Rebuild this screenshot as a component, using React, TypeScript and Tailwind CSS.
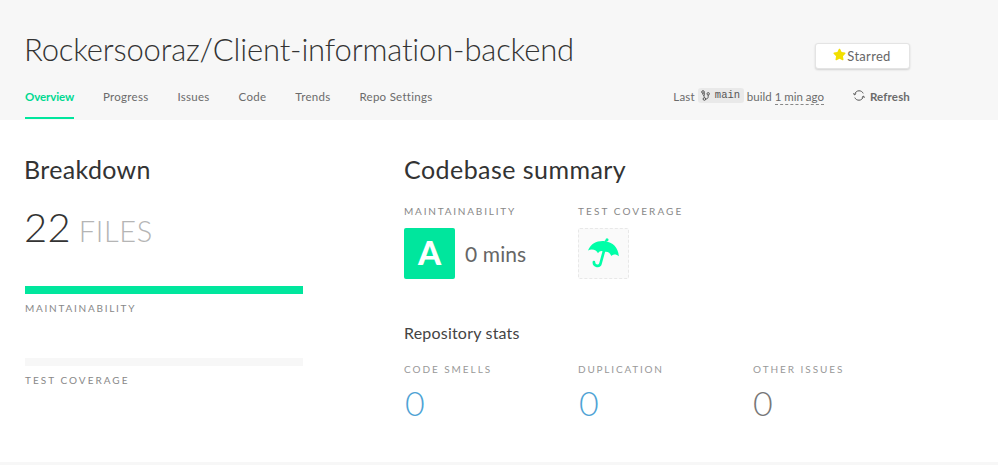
import { FaStar } from 'react-icons/fa';

const tabs = ['Progress', 'Issues', 'Code', 'Trends', 'Repo Settings'];

function Umbrella() {
  return (
    <svg width="33" height="31" viewBox="0 0 33 31" fill="none">
      <path
        d="M1 12.5C4 5.5 10 2.6 17.5 3.2C26 3.9 31.5 10 31.8 18.2C29.5 16 26.5 15.8 24.3 18C23 14.6 20 13 17 14.2C15.2 12.5 12.6 12.8 11 15.2C9.7 12 5 10.3 1 12.5Z"
        fill="#00ffa8"
      />
      <path d="M18.3 4L19 2.3" stroke="#00ffa8" strokeWidth="2" />
      <circle cx="20" cy="1.7" r="1.5" fill="#00ffa8" />
      <path
        d="M16.8 13.5L13.6 25.2C12.7 29.3 6.7 28.6 6.9 24"
        stroke="#00ffa8"
        strokeWidth="2.7"
        strokeLinecap="round"
      />
    </svg>
  );
}

function BranchIcon() {
  return (
    <svg width="9" height="11" viewBox="0 0 9 11" fill="none" stroke="#555" strokeWidth="1">
      <circle cx="2" cy="2" r="1.3" />
      <circle cx="3.4" cy="9" r="1.3" />
      <circle cx="7.2" cy="3.8" r="1.2" />
      <path d="M1.700 3.3C1.700 5 3.400 6 3.400 7.7M3.200 2.600C4 4 3.400 5 2.800 6M7.2 5V6.4C7.2 8.4 6 9 4.700 9" />
    </svg>
  );
}

function RefreshIcon() {
  return (
    <svg width="12" height="11" viewBox="0 0 12 11" fill="none" stroke="#555" strokeWidth="1">
      <path d="M1.6 4.6C2.3 2 4 .8 6 .8C7.900 .8 9.400 1.700 10.200 3.400M10.400 6.400C9.700 9 8 10.200 6 10.200C4.100 10.200 2.600 9.300 1.800 7.600" />
      <path d="M0 3.200L1.500 4.900L3.200 3.500M12 7.800L10.500 6.100L8.800 7.500" />
    </svg>
  );
}

export default function App() {
  return (
    <div className="flex h-[465px] w-[998px] flex-col overflow-hidden bg-white font-['Lato',sans-serif] text-[#333]">
      <header className="flex h-[120px] shrink-0 flex-col bg-[#f7f7f7] pr-[88px] pl-[25px]">
        <div className="flex h-[79px] shrink-0 justify-between">
          <h1 className="-ml-px pt-[29px] text-[31px] leading-[40px] font-light tracking-[-0.17px] whitespace-nowrap">
            Rockersooraz/Client-information-backend
          </h1>
          <button className="mt-[43px] flex h-[26px] w-[95px] items-center justify-center gap-px rounded-[3px] border border-[#e4e4e4] bg-white pr-px text-[13px] tracking-[0.3px] text-[#666] shadow-[0_1px_2px_rgba(0,0,0,0.15)]">
            <FaStar className="mb-1 size-[13px] text-[#f2df00]" />
            <span className="pt-0.5">Starred</span>
          </button>
        </div>
        <div className="flex h-10 justify-between text-[11.5px] leading-[16px] text-[#6b6b6b]">
          <nav className="flex gap-[29px] whitespace-nowrap">
            <a className="h-10 w-[49px] border-b-2 border-[#00e69d] pt-[10px] font-bold tracking-[-0.1px] text-[#00d991]">Overview</a>
            {tabs.map((tab) => (
              <a key={tab} className="pt-[10px] tracking-[0.28px]">{tab}</a>
            ))}
          </nav>
          <div className="flex h-[26px] items-start pt-[10px] whitespace-nowrap">
            <span className="tracking-[0.2px]">Last</span>
            <span className="-mt-px ml-[3px] flex h-[15px] w-[46px] items-center gap-[5px] rounded-[3px] bg-[#e9e9e9] pl-[3px] font-['Liberation_Mono',monospace] text-[10.500px] leading-[14px] text-[#555]">
              <BranchIcon />
              <span className="-mt-0.5">main</span>
            </span>
            <span className="ml-[3px]">build</span>
            <span className="ml-[3px] h-[16px] border-b border-dashed border-[#888] leading-[16px]">1 min ago</span>
            <span className="ml-[29px] flex gap-[5px] font-bold tracking-[0.15px]">
              <span className="pt-px"><RefreshIcon /></span>
              Refresh
            </span>
          </div>
        </div>
      </header>
      <main className="flex h-[342px] shrink-0 pl-[25px]">
        <section className="w-[278px]">
          <h2 className="mt-[33px] -ml-px text-[25px] leading-[32px] tracking-[0.35px]">Breakdown</h2>
          <div className="mt-[17px] -ml-px flex h-[50px] items-baseline gap-[8px] font-light">
            <span className="text-[40px] leading-[50px] tracking-[0.2px]">22</span>
            <span className="text-[29px] leading-[50px] tracking-[0.6px] text-[#b5b5b5]">FILES</span>
          </div>
          <div className="mt-[34px] h-2 bg-[#00e69d]" />
          <div className="mt-[6px] text-[10px] leading-[16px] tracking-[1.75px] text-[#888]">MAINTAINABILITY</div>
          <div className="mt-[42px] h-2 bg-[#f7f7f7]" />
          <div className="mt-[6px] text-[10px] leading-[16px] tracking-[2.030px] text-[#888]">TEST COVERAGE</div>
        </section>
        <section className="ml-[101px] w-[522px]">
          <h2 className="mt-[33px] text-[25px] leading-[32px] tracking-[0.45px]">Codebase summary</h2>
          <div className="mt-[18px] flex">
            <div className="w-[174px]">
              <div className="text-[10px] leading-[16px] tracking-[1.8px] text-[#888]">MAINTAINABILITY</div>
              <div className="mt-[9px] flex items-center gap-[10px]">
                <span className="flex size-[51px] items-center justify-center rounded-[2px] bg-[#00e69d] pb-0.5 text-[33px] font-black text-white">A</span>
                <span className="text-[21px] tracking-[0.1px] text-[#666]">0 mins</span>
              </div>
            </div>
            <div>
              <div className="text-[10px] leading-[16px] tracking-[2.100px] text-[#888]">TEST COVERAGE</div>
              <div className="mt-[9px] flex size-[51px] items-center justify-center rounded-[2px] border border-dashed border-[#e8e8e8] bg-[#fafafa]">
                <Umbrella />
              </div>
            </div>
          </div>
          <h3 className="mt-[43px] text-[16px] leading-[22px] tracking-[0.2px] text-[#444]">Repository stats</h3>
          <div className="mt-[17px] flex text-[10px] leading-[16px] tracking-[1.950px] text-[#999]">
            <div className="w-[174px]">
              <div>CODE SMELLS</div>
              <div className="mt-[6px] ml-px text-[34px] leading-[40px] font-light tracking-normal text-[#4fa3d5]">0</div>
            </div>
            <div className="w-[174px]">
              <div className="tracking-[1.8px]">DUPLICATION</div>
              <div className="mt-[6px] ml-px text-[34px] leading-[40px] font-light tracking-normal text-[#4fa3d5]">0</div>
            </div>
            <div className="w-[174px] pl-px">
              <div>OTHER ISSUES</div>
              <div className="mt-[6px] text-[34px] leading-[40px] font-light tracking-normal text-[#777]">0</div>
            </div>
          </div>
        </section>
      </main>
      <footer className="h-[3px] bg-[#f7f7f7]" />
    </div>
  );
}
